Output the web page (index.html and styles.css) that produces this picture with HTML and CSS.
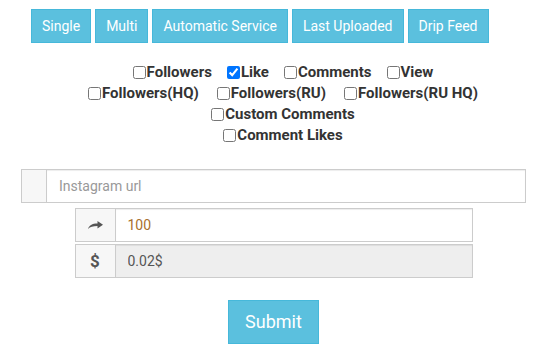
FILE: index.html
```html
<!DOCTYPE html>
<html>
<head>
	<meta name="viewport" content="width=device-width, initial-scale=1.0">
	<title>Order</title>
	<link rel="stylesheet" href="styles.css">
</head>
<body>

	<div class="tabs">
		<button class="btn">Single</button>
		<button class="btn">Multi</button>
		<button class="btn">Automatic Service</button>
		<button class="btn">Last Uploaded</button>
		<button class="btn">Drip Feed</button>
	</div>

	<div class="services">
		<div class="line">
			<label><input type="checkbox">Followers</label>
			<label><input type="checkbox" checked>Like</label>
			<label><input type="checkbox">Comments</label>
			<label><input type="checkbox">View</label>
		</div>
		<div class="line wide">
			<label><input type="checkbox">Followers(HQ)</label>
			<label><input type="checkbox">Followers(RU)</label>
			<label><input type="checkbox">Followers(RU HQ)</label>
		</div>
		<div class="line">
			<label><input type="checkbox">Custom Comments</label>
		</div>
		<div class="line">
			<label><input type="checkbox">Comment Likes</label>
		</div>
	</div>

	<div class="group url">
		<span class="addon addon-empty"></span>
		<input class="field" type="text" placeholder="Instagram url">
	</div>

	<div class="amount">
		<div class="group">
			<span class="addon">
				<svg width="15" height="8" viewBox="0 0 15 8"><path d="M0 8 C1 4.5 4 2.5 9.5 2.5 L9.5 0 L15 3.8 L9.5 7.6 L9.5 5 C5 5 2 5.8 0 8 Z" fill="#555"/></svg>
			</span>
			<input class="field count" type="text" value="100">
		</div>
		<div class="group">
			<span class="addon dollar">$</span>
			<input class="field" type="text" value="0.02$" readonly>
		</div>
	</div>

	<div class="submit-row">
		<button class="btn btn-lg">Submit</button>
	</div>

</body>
</html>
```

FILE: styles.css
```css
body{
	margin: 0;
	font-family: Roboto, "Liberation Sans", sans-serif;
	font-size: 14px;
	color: #333;
}

.btn{
	font-family: Roboto, "Liberation Sans", sans-serif;
	font-size: 14px;
	line-height: 20px;
	padding: 6px 10px;
	color: #fff;
	background-color: #5bc0de;
	border: 1px solid #46b8da;
	border-radius: 0;
	margin: 0;
}

.tabs{
	display: flex;
	gap: 4px;
	padding: 9px 0 0 31px;
}

.services{
	margin-top: 18px;
	padding-left: 19px;
}

.line{
	display: flex;
	justify-content: center;
	align-items: center;
	gap: 15px;
	height: 21px;
}

.wide{
	gap: 18px;
}

.line label{
	display: flex;
	align-items: center;
	font-weight: bold;
	font-size: 15px;
}

.line input{
	margin: 1px 1px 0 0;
	width: 13px;
	height: 13px;
}

.group{
	display: flex;
	height: 34px;
}

.url{
	width: 505px;
	margin: 24px auto 0;
}

.addon{
	display: flex;
	align-items: center;
	justify-content: center;
	box-sizing: border-box;
	width: 40px;
	background-color: #f7f7f7;
	border: 1px solid #ccc;
	border-right: 0;
	color: #555;
}

.addon-empty{
	width: 25px;
}

.dollar{
	font-weight: bold;
	font-size: 17px;
}

.field{
	flex: 1;
	box-sizing: border-box;
	height: 34px;
	margin: 0;
	padding: 6px 12px;
	border: 1px solid #ccc;
	border-radius: 0;
	box-shadow: inset 0 1px 1px rgba(0,0,0,.075);
	font-family: Roboto, "Liberation Sans", sans-serif;
	font-size: 14px;
	color: #555;
	outline: none;
}

.field::placeholder{
	color: #999;
}

.field[readonly]{
	background-color: #eee;
}

.count{
	color: #a8702e;
}

.amount{
	width: 398px;
	margin: 5px auto 0;
	display: flex;
	flex-direction: column;
	gap: 2px;
}

.submit-row{
	display: flex;
	justify-content: center;
	margin-top: 22px;
}

.btn-lg{
	font-size: 18px;
	line-height: 22px;
	padding: 10px 16px;
}
```
